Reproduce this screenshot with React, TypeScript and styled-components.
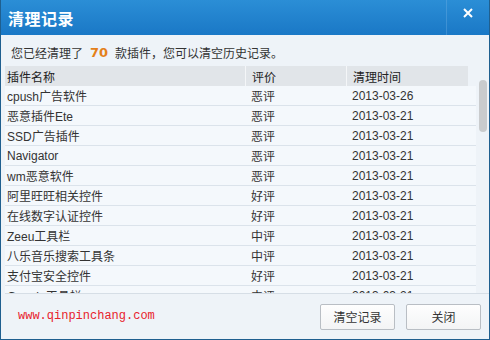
import React from 'react';
import styled, { createGlobalStyle } from 'styled-components';

const GlobalStyle = createGlobalStyle`
  html, body {
    margin: 0;
    padding: 0;
    background: #ffffff;
  }
  * {
    box-sizing: border-box;
  }
`;

// 창 전체
const Window = styled.div`
  width: 490px;
  height: 340px;
  display: flex;
  flex-direction: column;
  background: #eef3f8;
  border: 1px solid #1f5f8f;
  border-top: none;
  font-family: "Liberation Sans", "Noto Sans CJK SC", sans-serif;
  font-size: 12px;
  color: #333;
  overflow: hidden;
`;

// 타이틀 바
const TitleBar = styled.div`
  height: 35px;
  flex: none;
  display: flex;
  align-items: stretch;
  background: linear-gradient(#2b8ed6, #1a78c6);
  color: #fff;
`;

const Title = styled.div`
  flex: 1;
  display: flex;
  align-items: center;
  padding-left: 7px;
  font-family: "Noto Sans CJK SC", sans-serif;
  font-size: 16px;
  font-weight: bold;
  letter-spacing: 0.5px;
`;

const CloseButton = styled.div`
  width: 43px;
  display: flex;
  align-items: center;
  justify-content: center;
  padding-bottom: 10px;
  border-left: 1px solid rgba(120, 180, 230, 0.35);
`;

const Info = styled.div`
  height: 31px;
  flex: none;
  display: flex;
  align-items: center;
  padding-left: 10px;
  padding-top: 3px;
  font-family: "Noto Sans CJK SC", sans-serif;
`;

const Count = styled.span`
  color: #e4801a;
  font-family: Tahoma, "DejaVu Sans", sans-serif;
  font-weight: bold;
  font-size: 13px;
  margin: 0 7px;
`;

// 테이블 영역
const TableBox = styled.div`
  margin-left: 4px;
  height: 228px;
  flex: none;
  display: flex;
  border-bottom: 1px solid #d6dee6;
  overflow: hidden;
`;

const TableBody = styled.div`
  flex: 1;
  display: flex;
  flex-direction: column;
`;

const Columns = styled.div`
  display: grid;
  grid-template-columns: 240px 101px 1fr;
  height: 20px;
  flex: none;
  align-items: center;
`;

const HeaderRow = styled(Columns)`
  background: #e1e5e9;
  margin-right: 8px;
  font-family: "Noto Sans CJK SC", sans-serif;
  color: #222;
`;

const HeaderCell = styled.div<{ $first?: boolean }>`
  padding-left: ${(p) => (p.$first ? '2px' : '6px')};
  height: 100%;
  display: flex;
  align-items: center;
  border-left: ${(p) => (p.$first ? 'none' : '1px solid #f4f6f8')};
`;

const Row = styled(Columns)`
  background: #f4f8fc;
  border-bottom: 1px solid #dbe3eb;
`;

const Cell = styled.div<{ $first?: boolean }>`
  padding-left: ${(p) => (p.$first ? '2px' : '6px')};
  white-space: nowrap;
`;

const ScrollTrack = styled.div`
  width: 13px;
  flex: none;
  padding-top: 14px;
  display: flex;
  justify-content: center;
`;

const ScrollThumb = styled.div`
  width: 8px;
  height: 52px;
  border-radius: 4px;
  background: #c9cbcd;
`;

// 하단 영역
const Footer = styled.div`
  flex: 1;
  display: flex;
  align-items: center;
  padding: 0 8px 0 17px;
`;

const Site = styled.div`
  flex: 1;
  color: #e8222c;
  font-family: "Liberation Mono", monospace;
  font-size: 12px;
  padding-bottom: 2px;
`;

const Button = styled.button`
  width: 75px;
  height: 26px;
  margin-left: 11px;
  border: 1px solid #b9bec4;
  border-radius: 2px;
  background: linear-gradient(#fefefe, #f3f4f5);
  font-family: "Noto Sans CJK SC", sans-serif;
  font-size: 12px;
  color: #333;
  padding: 0;
`;

const records: [string, string, string][] = [
  ['cpush广告软件', '恶评', '2013-03-26'],
  ['恶意插件Ete', '恶评', '2013-03-21'],
  ['SSD广告插件', '恶评', '2013-03-21'],
  ['Navigator', '恶评', '2013-03-21'],
  ['wm恶意软件', '恶评', '2013-03-21'],
  ['阿里旺旺相关控件', '好评', '2013-03-21'],
  ['在线数字认证控件', '好评', '2013-03-21'],
  ['Zeeu工具栏', '中评', '2013-03-21'],
  ['八乐音乐搜索工具条', '中评', '2013-03-21'],
  ['支付宝安全控件', '好评', '2013-03-21'],
  ['Google工具栏', '中评', '2013-03-21'],
];

const App = () => (
  <>
    <GlobalStyle />
    <Window>
      <TitleBar>
        <Title>清理记录</Title>
        <CloseButton>
          <svg width="10" height="10" viewBox="0 0 10 10">
            <path d="M1 1L9 9M9 1L1 9" stroke="#fff" strokeWidth="2" />
          </svg>
        </CloseButton>
      </TitleBar>
      <Info>
        您已经清理了<Count>70</Count>款插件，您可以清空历史记录。
      </Info>
      <TableBox>
        <TableBody>
          <HeaderRow>
            <HeaderCell $first>插件名称</HeaderCell>
            <HeaderCell>评价</HeaderCell>
            <HeaderCell>清理时间</HeaderCell>
          </HeaderRow>
          {records.map(([name, rate, time]) => (
            <Row key={name}>
              <Cell $first>{name}</Cell>
              <Cell>{rate}</Cell>
              <Cell>{time}</Cell>
            </Row>
          ))}
        </TableBody>
        <ScrollTrack>
          <ScrollThumb />
        </ScrollTrack>
      </TableBox>
      <Footer>
        <Site>www.qinpinchang.com</Site>
        <Button>清空记录</Button>
        <Button>关闭</Button>
      </Footer>
    </Window>
  </>
);

export default App;
